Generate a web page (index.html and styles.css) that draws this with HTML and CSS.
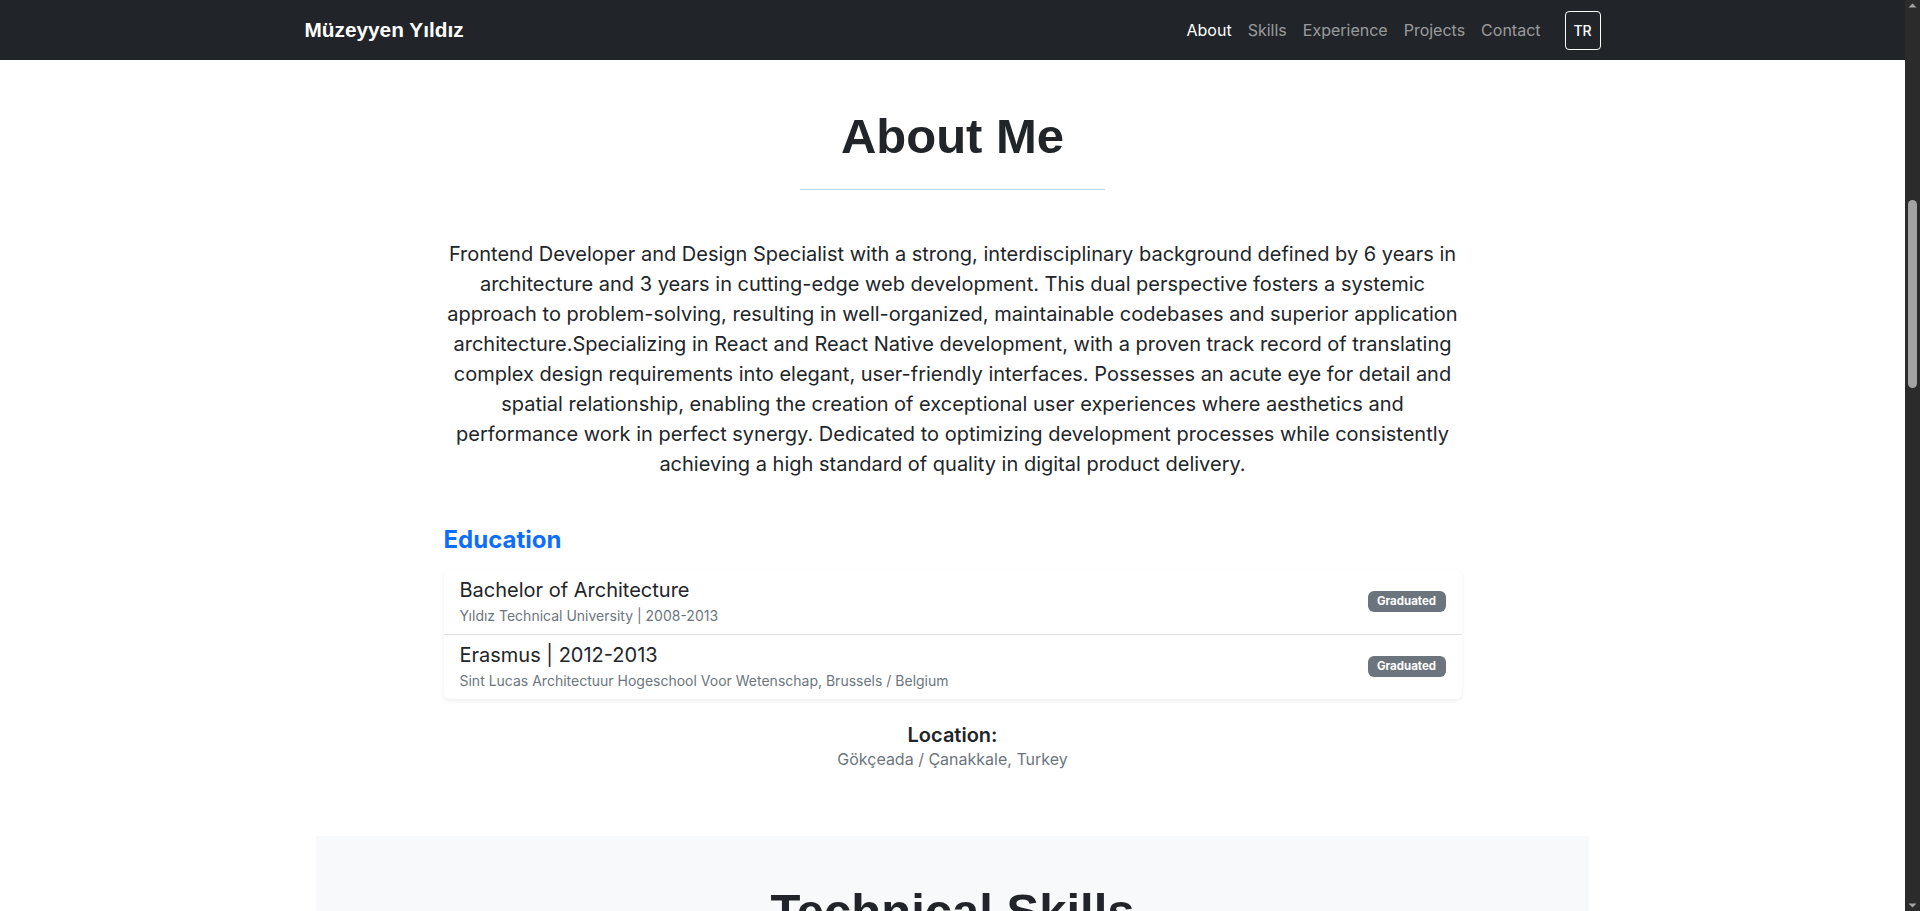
FILE: index.html
```html
<!DOCTYPE html>
<html lang="en">
<head>
<meta charset="utf-8">
<title>Müzeyyen Yıldız</title>
<link rel="stylesheet" href="styles.css">
</head>
<body>
<nav class="navbar">
  <div class="nav-container">
    <a class="brand" href="#">Müzeyyen Yıldız</a>
    <div class="nav-right">
      <ul class="nav-links">
        <li><a class="nav-link active" href="#about">About</a></li>
        <li><a class="nav-link" href="#skills">Skills</a></li>
        <li><a class="nav-link" href="#experience">Experience</a></li>
        <li><a class="nav-link" href="#projects">Projects</a></li>
        <li><a class="nav-link" href="#contact">Contact</a></li>
      </ul>
      <button class="lang-btn">TR</button>
    </div>
  </div>
</nav>
<main>
  <section class="about" id="about">
    <div class="about-inner">
      <h1 class="section-title">About Me</h1>
      <hr class="title-rule">
      <p class="about-text">Frontend Developer and Design Specialist with a strong, interdisciplinary background defined by 6 years in architecture and 3 years in cutting-edge web development. This dual perspective fosters a systemic approach to problem-solving, resulting in well-organized, maintainable codebases and superior application architecture.Specializing in React and React Native development, with a proven track record of translating complex design requirements into elegant, user-friendly interfaces. Possesses an acute eye for detail and spatial relationship, enabling the creation of exceptional user experiences where aesthetics and performance work in perfect synergy. Dedicated to optimizing development processes while consistently achieving a high standard of quality in digital product delivery.</p>
      <h3 class="edu-title">Education</h3>
      <ul class="edu-list">
        <li class="edu-item">
          <div class="edu-info">
            <h5 class="edu-degree">Bachelor of Architecture</h5>
            <small class="edu-school">Yıldız Technical University | 2008-2013</small>
          </div>
          <span class="badge">Graduated</span>
        </li>
        <li class="edu-item">
          <div class="edu-info">
            <h5 class="edu-degree">Erasmus | 2012-2013</h5>
            <small class="edu-school">Sint Lucas Architectuur Hogeschool Voor Wetenschap, Brussels / Belgium</small>
          </div>
          <span class="badge">Graduated</span>
        </li>
      </ul>
      <div class="location">
        <h5 class="location-label">Location:</h5>
        <p class="location-value">Gökçeada / Çanakkale, Turkey</p>
      </div>
    </div>
  </section>
  <section class="skills" id="skills">
    <h2 class="section-title">Technical Skills</h2>
    <hr class="title-rule">
    <div class="skill-grid">
      <div class="skill-card">
        <h4 class="skill-head">Frontend</h4>
        <ul class="skill-tags"><li>React</li><li>React Native</li><li>JavaScript</li><li>TypeScript</li><li>HTML5</li><li>CSS3</li></ul>
      </div>
      <div class="skill-card">
        <h4 class="skill-head">Styling</h4>
        <ul class="skill-tags"><li>Bootstrap</li><li>Tailwind CSS</li><li>Sass</li><li>Styled Components</li></ul>
      </div>
      <div class="skill-card">
        <h4 class="skill-head">Tools</h4>
        <ul class="skill-tags"><li>Git</li><li>Figma</li><li>Redux</li><li>Vite</li></ul>
      </div>
    </div>
  </section>
</main>
<div class="scrollbar" aria-hidden="true">
  <svg class="scroll-arrow" width="15" height="15" viewBox="0 0 15 15"><path d="M3.5 7.5 L7.5 3.5 L11.5 7.5 Z" fill="#a3a3a3"/></svg>
  <div class="scroll-track"><div class="scroll-thumb"></div></div>
  <svg class="scroll-arrow" width="15" height="15" viewBox="0 0 15 15"><path d="M3.5 7.5 L7.5 11.5 L11.5 7.5 Z" fill="#a3a3a3"/></svg>
</div>
</body>
</html>
```
FILE: styles.css
```css
html {
  background: #ffffff;
}
* { box-sizing: border-box; }
body {
  margin: 0;
  padding-right: 15px;
  background: #ffffff;
  color: #212529;
  font-family: Inter, "Noto Sans", sans-serif;
  font-size: 16px;
  line-height: 1.5;
}
a { text-decoration: none; }

.navbar {
  background: #212529;
  height: 60px;
  position: sticky;
  top: 0;
  z-index: 10;
}
.nav-container {
  max-width: 1320px;
  height: 100%;
  margin: 0 auto;
  padding: 0 12px;
  display: flex;
  align-items: center;
  justify-content: space-between;
}
.brand {
  color: #ffffff;
  font-family: "Liberation Sans", Arial, sans-serif;
  font-weight: 700;
  font-size: 20.8px;
  line-height: 1;
  padding-top: 1px;
}
.nav-right {
  display: flex;
  align-items: center;
}
.nav-links {
  list-style: none;
  margin: 0;
  padding: 0;
  display: flex;
}
.nav-link {
  display: block;
  padding: 8px;
  color: rgba(255, 255, 255, 0.55);
  font-size: 16px;
  line-height: 24px;
}
.nav-link.active { color: #ffffff; }
.lang-btn {
  margin-left: 16px;
  width: 36px;
  height: 39px;
  padding: 0;
  background: transparent;
  border: 1px solid #ffffff;
  border-radius: 4px;
  color: #ffffff;
  font-family: Inter, sans-serif;
  font-size: 14px;
  font-weight: 500;
}

.about {
  padding: 47px 12px 65px;
}
.about-inner {
  max-width: 1018px;
  margin: 0 auto;
}
.section-title {
  margin: 0;
  text-align: center;
  font-family: "Liberation Sans", Arial, sans-serif;
  font-weight: 700;
  font-size: 49px;
  line-height: 1.2;
  color: #212529;
}
.title-rule {
  width: 305px;
  margin: 23px auto 0;
  border: 0;
  border-top: 1px solid #bcd5f9;
  height: 0;
}
.about-text {
  margin: 49px -6px 0;
  text-align: center;
  font-size: 20px;
  line-height: 30px;
  color: #212529;
}
.edu-title {
  margin: 47px 0 15px;
  color: #0d6efd;
  font-size: 24px;
  font-weight: 700;
  line-height: 1.2;
}
.edu-list {
  list-style: none;
  margin: 0;
  padding: 0;
  background: #ffffff;
  border-radius: 6px;
  box-shadow: 0 2px 4px rgba(0, 0, 0, 0.075);
}
.edu-item {
  display: flex;
  align-items: center;
  justify-content: space-between;
  padding: 8px 16px;
}
.edu-item + .edu-item {
  border-top: 1px solid #dee2e6;
}
.edu-degree {
  margin: 0 0 3px;
  font-size: 20px;
  font-weight: 400;
  line-height: 24px;
  color: #212529;
}
.edu-school {
  display: block;
  font-size: 14px;
  line-height: 21px;
  color: #6c757d;
}
.badge {
  display: inline-block;
  background: #6c757d;
  color: #ffffff;
  font-size: 11.5px;
  font-weight: 700;
  line-height: 1;
  padding: 5px 8px;
  border-radius: 6px;
  width: 78px;
  text-align: center;
}
.location {
  margin-top: 24px;
  text-align: center;
}
.location-label {
  margin: 0;
  font-size: 20px;
  font-weight: 600;
  line-height: 24px;
  color: #212529;
}
.location-value {
  margin: 0;
  font-size: 16px;
  line-height: 24px;
  color: #6c757d;
}

.skills {
  max-width: 1273px;
  margin: 0 auto;
  background: #f8f9fa;
  padding: 46px 24px 64px;
}
.skill-grid {
  margin-top: 48px;
  display: grid;
  grid-template-columns: repeat(3, 1fr);
  gap: 24px;
}
.skill-card {
  background: #ffffff;
  border-radius: 6px;
  box-shadow: 0 2px 4px rgba(0, 0, 0, 0.075);
  padding: 24px;
}
.skill-head {
  margin: 0 0 16px;
  color: #0d6efd;
  font-size: 20px;
  font-weight: 600;
}
.skill-tags {
  list-style: none;
  margin: 0;
  padding: 0;
  display: flex;
  flex-wrap: wrap;
  gap: 8px;
}
.skill-tags li {
  background: #e9ecef;
  border-radius: 6px;
  padding: 4px 10px;
  font-size: 14px;
}

.scrollbar {
  position: fixed;
  top: 0;
  right: 0;
  width: 15px;
  height: 100vh;
  background: #2b2b2b;
  display: flex;
  flex-direction: column;
  z-index: 20;
}
.scroll-arrow {
  display: block;
  flex: 0 0 15px;
}
.scroll-track {
  flex: 1;
  padding: 185px 3px 0;
}
.scroll-thumb {
  height: 188px;
  width: 9px;
  background: #a3a3a3;
  border-radius: 5px;
}
```
